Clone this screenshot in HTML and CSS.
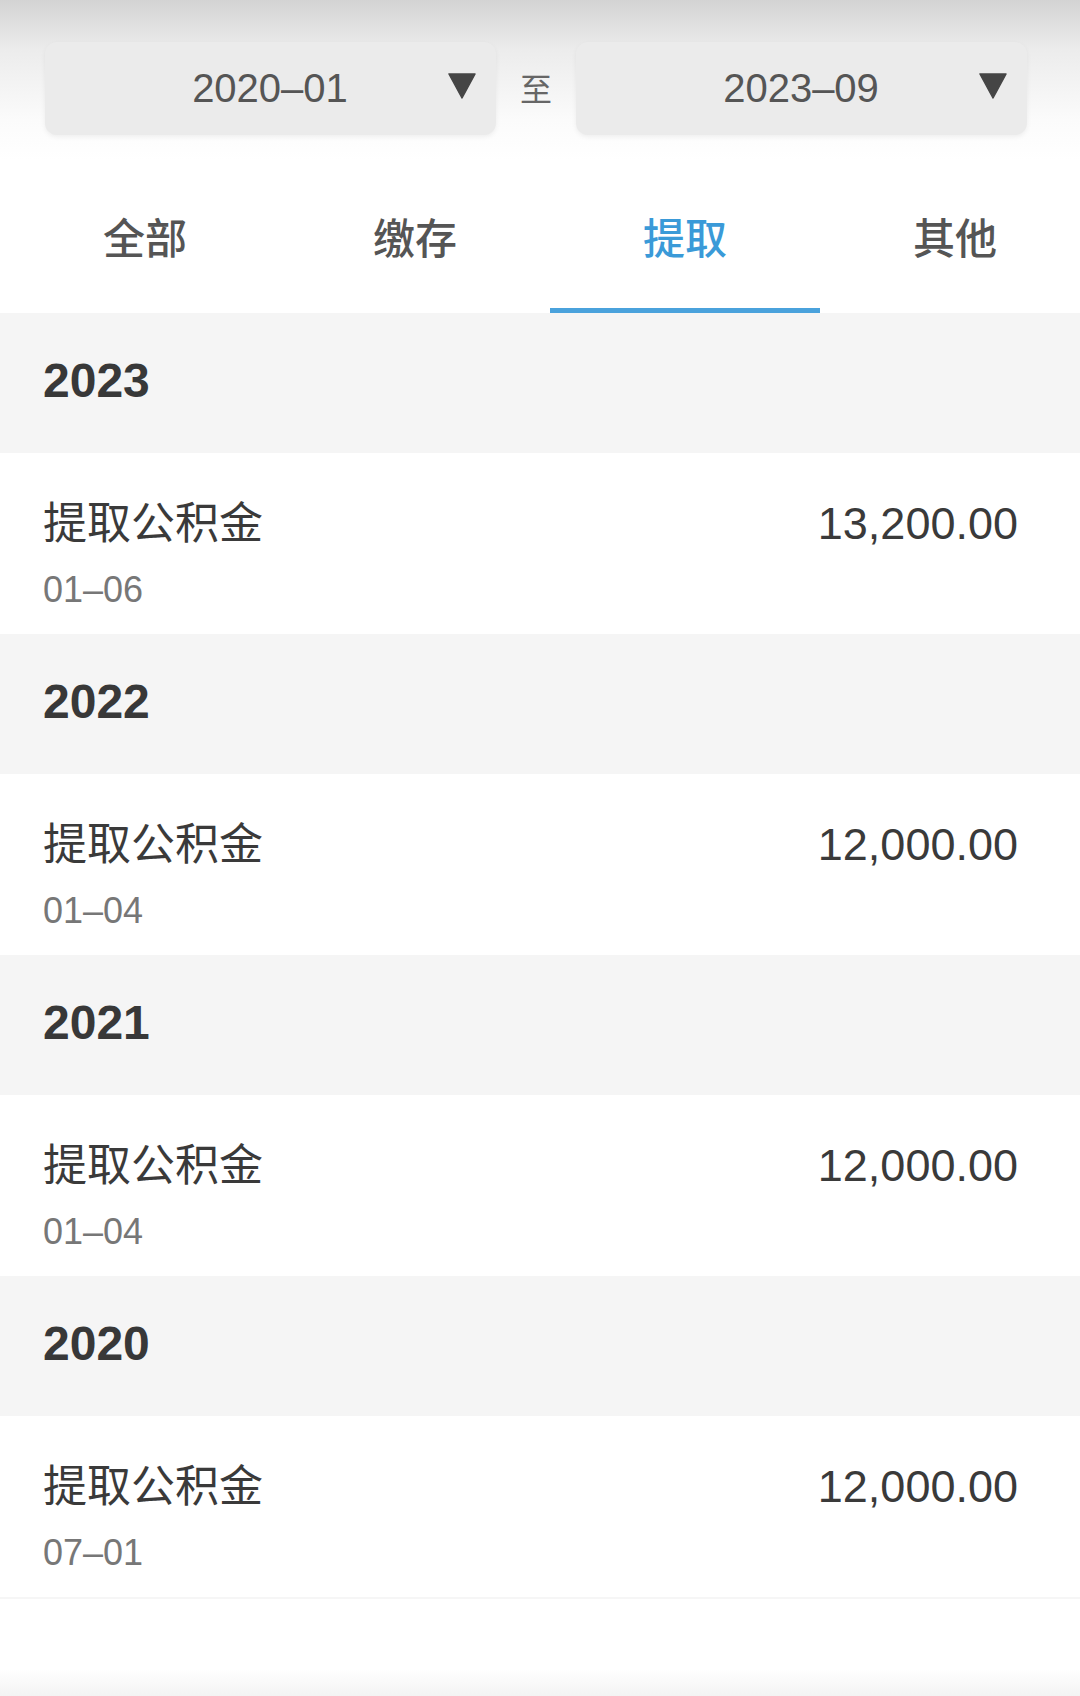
FILE: index.html
```html
<!DOCTYPE html>
<html lang="zh-CN">
<head>
    <meta charset="UTF-8">
    <meta name="viewport" content="width=device-width, initial-scale=1.0">
    <title>公积金明细</title>
    <link rel="stylesheet" href="styles.css">
</head>
<body>
    <div class="page">
        <div class="filter">
            <div class="select">
                <span class="select-text">2020–01</span>
                <svg class="arrow" width="28" height="26" viewBox="0 0 28 26"><path d="M1 1 H27 L14 25 Z" fill="#454545" stroke="#454545" stroke-width="1.5" stroke-linejoin="round"/></svg>
            </div>
            <span class="to">至</span>
            <div class="select">
                <span class="select-text">2023–09</span>
                <svg class="arrow" width="28" height="26" viewBox="0 0 28 26"><path d="M1 1 H27 L14 25 Z" fill="#454545" stroke="#454545" stroke-width="1.5" stroke-linejoin="round"/></svg>
            </div>
        </div>

        <div class="tabs">
            <div class="tab">全部</div>
            <div class="tab">缴存</div>
            <div class="tab active">提取</div>
            <div class="tab">其他</div>
        </div>

        <div class="list">
            <div class="year">2023</div>
            <div class="item">
                <div class="item-info">
                    <div class="item-title">提取公积金</div>
                    <div class="item-date">01–06</div>
                </div>
                <div class="item-amount">13,200.00</div>
            </div>

            <div class="year">2022</div>
            <div class="item">
                <div class="item-info">
                    <div class="item-title">提取公积金</div>
                    <div class="item-date">01–04</div>
                </div>
                <div class="item-amount">12,000.00</div>
            </div>

            <div class="year">2021</div>
            <div class="item">
                <div class="item-info">
                    <div class="item-title">提取公积金</div>
                    <div class="item-date">01–04</div>
                </div>
                <div class="item-amount">12,000.00</div>
            </div>

            <div class="year">2020</div>
            <div class="item">
                <div class="item-info">
                    <div class="item-title">提取公积金</div>
                    <div class="item-date">07–01</div>
                </div>
                <div class="item-amount">12,000.00</div>
            </div>
        </div>

        <div class="footer"></div>
    </div>
</body>
</html>
```

FILE: styles.css
```css
body {
    margin: 0;
    font-family: "Liberation Sans", "Noto Sans CJK SC", sans-serif;
    color: #333;
    background-color: #fff;
}
.page {
    width: 1080px;
    height: 1696px;
    overflow: hidden;
    display: flex;
    flex-direction: column;
}
.filter {
    display: flex;
    align-items: center;
    gap: 24px;
    padding: 42px 0 25px 45px;
    background: linear-gradient(#d3d3d3 0, #ececec 50px, #fbfbfb 120px, #fff 160px);
}
.select {
    width: 451px;
    height: 93px;
    box-sizing: border-box;
    display: flex;
    align-items: center;
    padding: 0 20px 0 47px;
    background-color: #ebebeb;
    border-radius: 12px;
    box-shadow: 0 2px 5px rgba(0, 0, 0, 0.06);
}
.select-text {
    flex: 1;
    text-align: center;
    font-size: 40px;
    color: #555;
}
.arrow {
    display: block;
    margin-top: -6px;
}
.to {
    font-size: 32px;
    color: #666;
    margin-top: -4px;
}
.tabs {
    display: flex;
    height: 153px;
    padding-left: 10px;
    overflow: hidden;
}
.tab {
    flex: none;
    width: 270px;
    display: flex;
    align-items: center;
    justify-content: center;
    font-size: 42px;
    font-weight: 500;
    color: #555;
    border-bottom: 5px solid transparent;
    box-sizing: border-box;
    padding-top: 2px;
}
.tab.active {
    color: #3a9ad8;
    border-bottom-color: #4aa2dc;
}
.year {
    height: 140px;
    display: flex;
    align-items: center;
    padding-left: 43px;
    padding-bottom: 6px;
    box-sizing: border-box;
    background-color: #f5f5f5;
    font-size: 48px;
    font-weight: bold;
    color: #383838;
}
.item {
    height: 181px;
    box-sizing: border-box;
    display: flex;
    justify-content: space-between;
    align-items: flex-start;
    padding: 44px 62px 0 43px;
    background-color: #fff;
}
.item-title {
    font-size: 44px;
    line-height: 54px;
    color: #3a3a3a;
}
.item-date {
    margin-top: 17px;
    font-size: 36px;
    line-height: 44px;
    color: #777;
}
.item-amount {
    font-size: 45px;
    line-height: 54px;
    color: #3a3a3a;
}
.footer {
    flex: 1;
    border-top: 2px solid #f6f6f6;
    background: linear-gradient(#fff 0, #fff 70px, #f2f2f2 100px);
}
```
